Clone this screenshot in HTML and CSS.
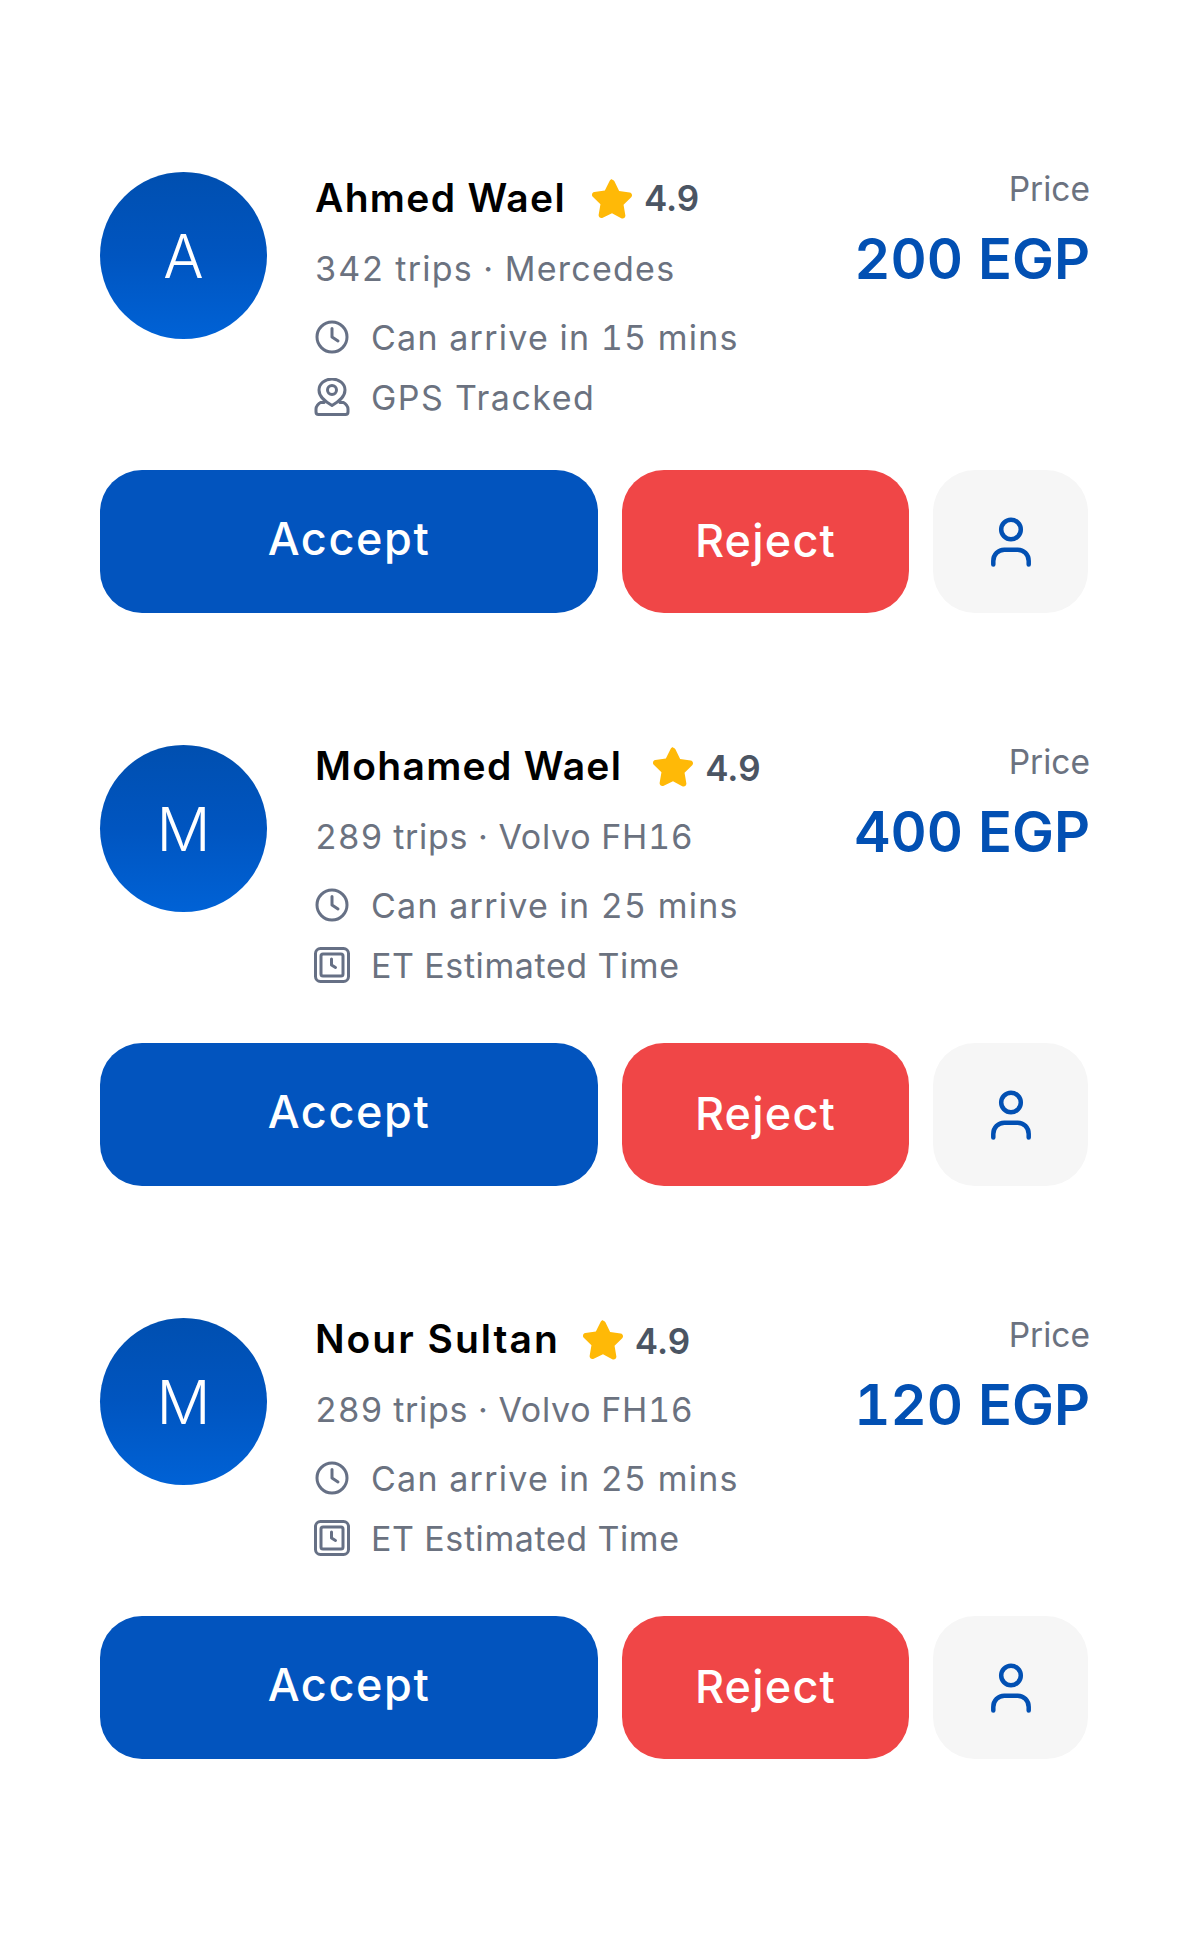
FILE: index.html
```html
<!DOCTYPE html>
<html lang="en">
<head>
<meta charset="utf-8">
<title>Driver offers</title>
<link rel="stylesheet" href="styles.css">
</head>
<body>
<svg class="defs" width="0" height="0" aria-hidden="true">
  <symbol id="star" viewBox="0 0 40 40"><path d="M20 2.500c1 0 1.800.6 2.300 1.600l4.500 9.200 10 1.500c2.200.3 3 3 1.500 4.500l-7.300 7.100 1.700 10c.4 2.200-1.900 3.900-3.900 2.800L20 34.500l-8.800 4.300c-2 1.100-4.300-.6-3.900-2.800l1.700-10-7.300-7.100c-1.500-1.500-.7-4.200 1.500-4.500l10-1.500 4.500-9.200c.5-1 1.300-1.600 2.300-1.600z"/></symbol>
  <symbol id="clock" viewBox="-1 -2 36 38"><circle cx="17" cy="17" r="15"/><path d="M17 8.500v8.500l6 4"/></symbol>
  <symbol id="pin" viewBox="0 0 36 38"><path d="M18 27.500c-6-3.500-13-8-13-15.500a13 11 0 0 1 26 0c0 7.500-7 12-13 15.500z"/><circle cx="18" cy="12" r="4.500"/><path d="M10 24.500H6.500c-2 1-4.500 4-4.500 6.500v3c0 1.500 1 2.500 2.500 2.500h27c1.500 0 2.500-1 2.500-2.500v-3c0-2.500-2.500-5.500-4.500-6.500H26"/></symbol>
  <symbol id="timer" viewBox="0 -1 36 38"><rect x="1.500" y="1.500" width="33" height="33" rx="5"/><rect x="7" y="7" width="22" height="22" rx="2"/><path d="M17.500 12v6l4 2.500"/></symbol>
  <symbol id="user" viewBox="0 -1.500 44 52"><circle cx="22" cy="12" r="9.800"/><path d="M4.300 47v-3.500c0-6.500 5-11.200 11-11.200h13.400c6 0 11 4.700 11 11.200V47"/></symbol>
</svg>
<main class="list">

  <article class="offer offer--lead">
    <div class="summary">
      <div class="avatar">A</div>
      <div class="info">
        <div class="heading">
          <h2 class="name">Ahmed Wael</h2>
          <svg class="star"><use href="#star"/></svg>
          <span class="rating">4.9</span>
        </div>
        <p class="meta">342 trips · Mercedes</p>
        <p class="feature"><svg class="ico"><use href="#clock"/></svg>Can arrive in 15 mins</p>
        <p class="feature feature--loose"><svg class="ico"><use href="#pin"/></svg>GPS Tracked</p>
      </div>
      <div class="price">
        <span class="price-label">Price</span>
        <strong class="price-value">200 EGP</strong>
      </div>
    </div>
    <div class="actions">
      <button class="btn btn-accept">Accept</button>
      <button class="btn btn-reject">Reject</button>
      <button class="btn btn-profile" aria-label="Profile"><svg class="user"><use href="#user"/></svg></button>
    </div>
  </article>

  <article class="offer offer--wide">
    <div class="summary">
      <div class="avatar">M</div>
      <div class="info">
        <div class="heading">
          <h2 class="name">Mohamed Wael</h2>
          <svg class="star"><use href="#star"/></svg>
          <span class="rating">4.9</span>
        </div>
        <p class="meta meta--tight">289 trips · Volvo FH16</p>
        <p class="feature"><svg class="ico"><use href="#clock"/></svg>Can arrive in 25 mins</p>
        <p class="feature feature--tight"><svg class="ico"><use href="#timer"/></svg>ET Estimated Time</p>
      </div>
      <div class="price">
        <span class="price-label">Price</span>
        <strong class="price-value">400 EGP</strong>
      </div>
    </div>
    <div class="actions">
      <button class="btn btn-accept">Accept</button>
      <button class="btn btn-reject">Reject</button>
      <button class="btn btn-profile" aria-label="Profile"><svg class="user"><use href="#user"/></svg></button>
    </div>
  </article>

  <article class="offer offer--short">
    <div class="summary">
      <div class="avatar">M</div>
      <div class="info">
        <div class="heading">
          <h2 class="name">Nour Sultan</h2>
          <svg class="star"><use href="#star"/></svg>
          <span class="rating">4.9</span>
        </div>
        <p class="meta meta--tight">289 trips · Volvo FH16</p>
        <p class="feature"><svg class="ico"><use href="#clock"/></svg>Can arrive in 25 mins</p>
        <p class="feature feature--tight"><svg class="ico"><use href="#timer"/></svg>ET Estimated Time</p>
      </div>
      <div class="price">
        <span class="price-label">Price</span>
        <strong class="price-value">120 EGP</strong>
      </div>
    </div>
    <div class="actions">
      <button class="btn btn-accept">Accept</button>
      <button class="btn btn-reject">Reject</button>
      <button class="btn btn-profile" aria-label="Profile"><svg class="user"><use href="#user"/></svg></button>
    </div>
  </article>

</main>
</body>
</html>
```
FILE: styles.css
```css
* { box-sizing: border-box; }
html, body { margin: 0; background: #fff; }
body { font-family: Inter, "Liberation Sans", sans-serif; height: 1936px; overflow: hidden; }
.defs { position: absolute; }

.list { padding: 172px 94px 0 100px; display: flex; flex-direction: column; gap: 132px; }
.offer { display: flex; flex-direction: column; }
.summary { display: flex; height: 298px; }

.avatar {
  width: 167px; height: 167px; flex: none; border-radius: 50%;
  background: linear-gradient(180deg, #004FB0 0%, #0055C0 50%, #0062D6 100%);
  color: #fff; font-size: 60px; font-weight: 300; line-height: 169px; text-align: center;
}

.info { flex: 1; margin-left: 48px; padding-top: 0; }
.offer--lead .info { padding-top: 5px; }

.heading { display: flex; align-items: center; height: 42px; }
.name { margin: 0; font-size: 39px; font-weight: 600; letter-spacing: 1.3px; line-height: 42px; color: #000; }
.star { width: 42px; height: 42px; margin-left: 25px; fill: #FFB907; flex: none; }
.offer--wide .star { margin-left: 30px; }
.offer--short .name { letter-spacing: 2px; }
.offer--short .star { margin-left: 22px; }
.rating { margin-left: 11px; font-size: 35px; font-weight: 600; color: #4B5563; position: relative; top: 2px; }
.offer--lead .rating { top: 0; }

.meta { margin: 30px 0 0; font-size: 34px; line-height: 40px; letter-spacing: 1.25px; color: #6B7280; font-variant-numeric: tabular-nums; }
.meta--tight { letter-spacing: 0.72px; }
.feature { margin: 0; height: 60px; display: flex; align-items: center; font-size: 34px; letter-spacing: 1.26px; color: #6B7280; white-space: nowrap; font-variant-numeric: tabular-nums; }
.feature--tight { letter-spacing: 0.6px; }
.feature--loose { letter-spacing: 1.5px; }
.meta + .feature { margin-top: 18px; }
.ico { width: 36px; height: 38px; margin: 0 21px 0 -1px; fill: none; stroke: #667085; stroke-width: 3; stroke-linecap: round; stroke-linejoin: round; flex: none; }

.price { flex: none; display: flex; flex-direction: column; align-items: flex-end; }
.price-label { font-size: 33.5px; line-height: 34px; color: #6B7280; }
.price-value { margin-top: 20px; font-size: 56px; line-height: 66px; font-weight: 600; color: #0250B3; font-variant-numeric: tabular-nums; }

.actions { display: flex; gap: 24px; height: 143px; }
.btn { border: 0; padding: 0; font-family: inherit; font-size: 45px; font-weight: 500; color: #fff; display: flex; align-items: center; justify-content: center; border-radius: 42px; }
.btn-accept { width: 498px; background: #0254BE; padding-bottom: 7px; letter-spacing: 1.6px; }
.btn-reject { width: 287px; background: #F04647; padding-bottom: 2px; letter-spacing: 1.2px; }
.btn-profile { width: 155px; background: #F6F6F6; }
.user { width: 44px; height: 52px; fill: none; stroke: #0250B3; stroke-width: 4.5; stroke-linecap: round; }
```
